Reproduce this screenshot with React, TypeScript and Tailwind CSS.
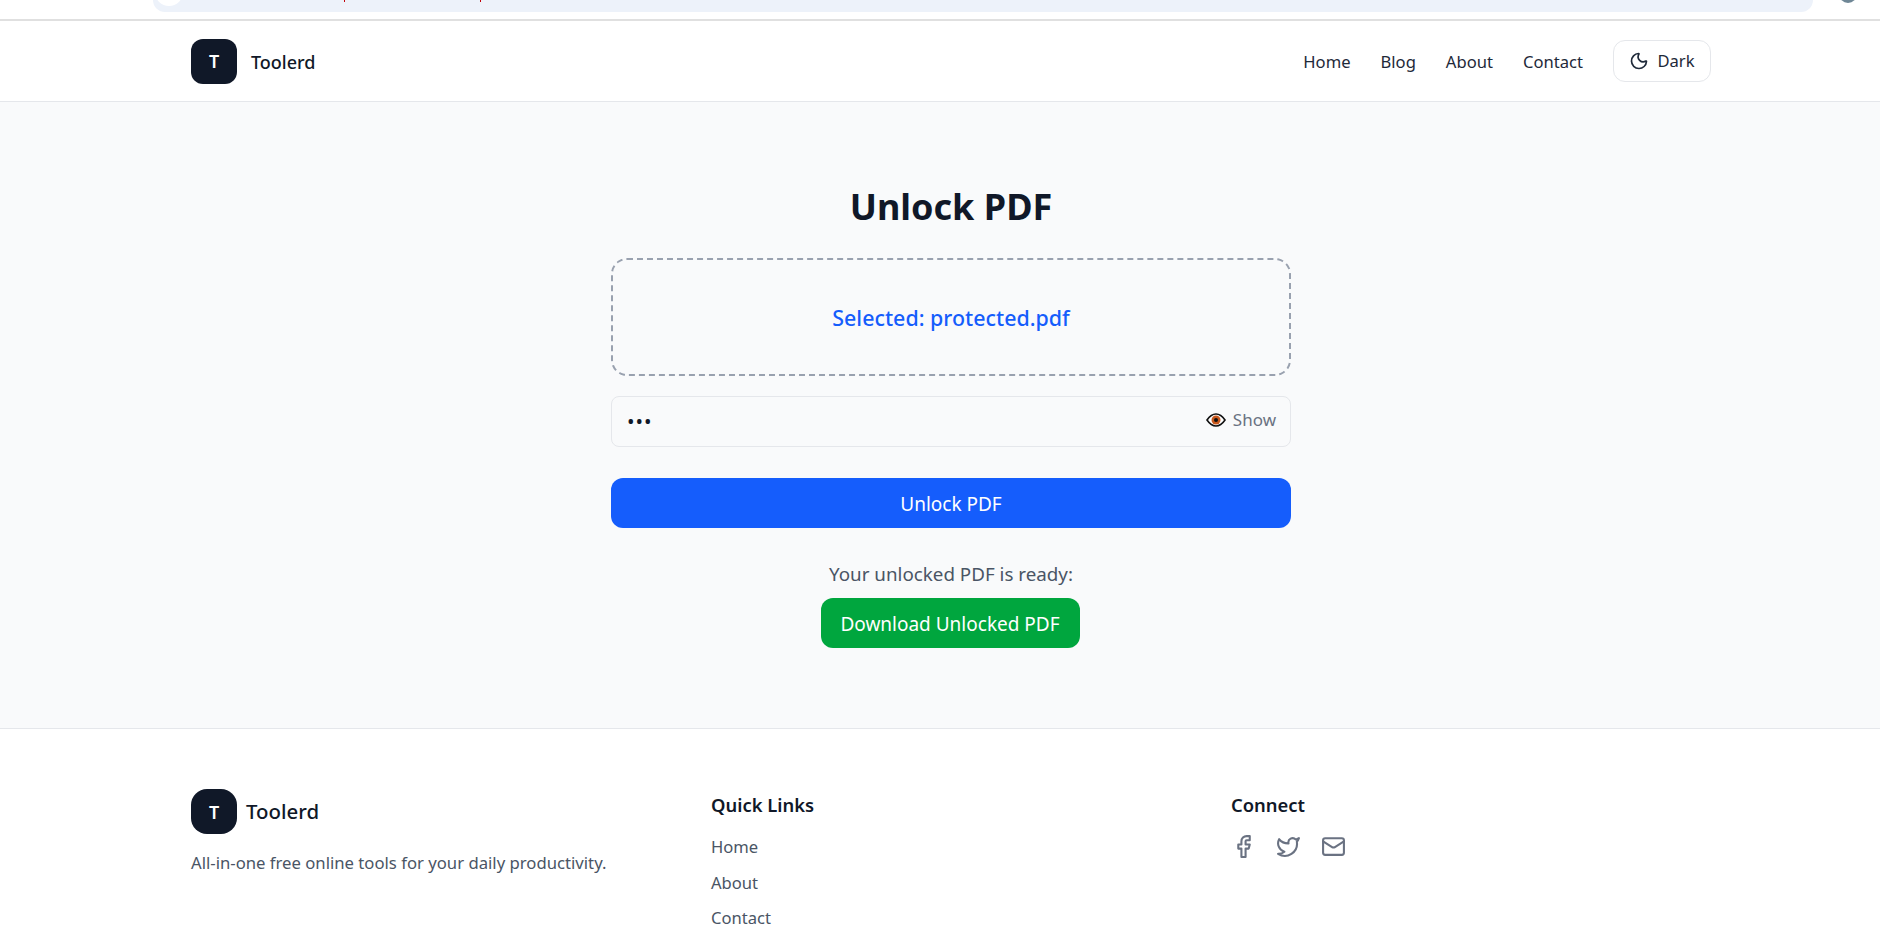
import { Facebook, Mail, Moon, Twitter } from 'lucide-react';

function EyeEmoji() {
  return (
    <svg width="20" height="14" viewBox="0 0 20 14" className="shrink-0">
      <path d="M1 7C4 2.6 7 1 10 1s6 1.6 9 6c-3 4.400-6 6-9 6s-6-1.600-9-6z" fill="#fff" stroke="#111" strokeWidth="1.600" />
      <circle cx="10" cy="7" r="4.500" fill="#c8581c" />
      <circle cx="10" cy="7" r="2" fill="#111" />
    </svg>
  );
}

function Logo({ className }: { className: string }) {
  return (
    <div className={`flex items-center justify-center w-[46px] h-[45px] bg-gray-900 text-white font-semibold text-lg ${className}`}>
      T
    </div>
  );
}

export default function App() {
  return (
    <div className="h-[936px] w-full overflow-hidden bg-white font-['Noto_Sans','Open_Sans',sans-serif]">
      <div className="w-[1902px]">
        {/* Browser chrome sliver */}
        <div className="h-[21px] bg-white border-b-2 border-[#e0e0e0] relative">
          <div className="absolute left-[153px] top-0 w-[1660px] h-[12px] bg-[#edf2fa] rounded-b-[14px]"></div>
          <div className="absolute left-[155px] -top-[22px] w-[28px] h-[28px] rounded-full bg-white"></div>
          <div className="absolute left-[344px] top-0 w-px h-[2px] bg-red-700"></div>
          <div className="absolute left-[480px] top-0 w-px h-[2px] bg-red-700"></div>
          <div className="absolute left-[1839px] -top-[15px] w-[18px] h-[18px] rounded-full bg-[#6f8796]"></div>
        </div>

        {/* Header */}
        <header className="h-[81px] border-b border-gray-200 bg-white">
          <div className="mx-auto max-w-[1520px] h-full flex items-center justify-between">
            <div className="flex items-center gap-[14px]">
              <Logo className="rounded-xl" />
              <span className="pt-px text-lg font-medium text-gray-900">Toolerd</span>
            </div>
            <nav className="flex items-center gap-[30px] text-[16.6px] text-gray-800">
              <a href="#" className="pt-[2px]">Home</a>
              <a href="#" className="pt-[2px]">Blog</a>
              <a href="#" className="pt-[2px]">About</a>
              <a href="#" className="pt-[2px]">Contact</a>
              <button className="flex items-center gap-2 h-[42px] w-[98px] justify-center rounded-xl border border-gray-200 text-gray-800">
                <Moon size={20} />
                Dark
              </button>
            </nav>
          </div>
        </header>

        {/* Tool */}
        <main className="h-[626px] bg-gray-50 flex flex-col items-center pt-[81px]">
          <h1 className="text-4xl font-bold text-gray-900 h-[48px] leading-[48px]">Unlock PDF</h1>
          <div className="mt-[27px] pt-[2px] w-[680px] h-[118px] rounded-2xl border-2 border-dashed border-gray-400 flex items-center justify-center text-[21.400px] font-medium text-blue-600">
            Selected: protected.pdf
          </div>
          <div className="relative mt-[20px] w-[680px] h-[51px] rounded-lg border border-gray-200 flex items-center px-[15px]">
            <span className="text-gray-900 text-xl tracking-wider">•••</span>
            <button className="absolute right-[14px] top-[10px] flex items-center gap-[7px] text-[17px] text-gray-500">
              <EyeEmoji />
              Show
            </button>
          </div>
          <button className="mt-[31px] pt-[2px] w-[680px] h-[50px] rounded-xl bg-blue-600 text-white text-[19px]">Unlock PDF</button>
          <p className="mt-[32px] text-[18.800px] leading-7 text-gray-600">Your unlocked PDF is ready:</p>
          <button className="mt-[10px] mr-[2px] pt-[2px] w-[259px] h-[50px] rounded-xl bg-green-600 text-white text-[19px]">Download Unlocked PDF</button>
        </main>

        {/* Footer */}
        <footer className="border-t border-gray-200 bg-white pt-[60px]">
          <div className="mx-auto max-w-[1520px] grid grid-cols-3 gap-10">
            <div>
              <div className="flex items-center gap-[9px]">
                <Logo className="rounded-2xl" />
                <span className="text-[20.400px] font-medium text-gray-900">Toolerd</span>
              </div>
              <p className="mt-[16px] text-[16.700px] text-gray-600">All-in-one free online tools for your daily productivity.</p>
            </div>
            <div>
              <h3 className="pt-[2px] text-[18.400px] font-semibold text-gray-900">Quick Links</h3>
              <ul className="mt-[16px] flex flex-col gap-[11px] text-[16.600px] text-gray-600">
                <li>Home</li>
                <li>About</li>
                <li>Contact</li>
              </ul>
            </div>
            <div>
              <h3 className="pt-[2px] text-[18.400px] font-semibold text-gray-900">Connect</h3>
              <div className="mt-[15px] flex gap-5 text-gray-500">
                <Facebook size={25} />
                <Twitter size={25} />
                <Mail size={25} />
              </div>
            </div>
          </div>
        </footer>
      </div>
    </div>
  );
}
